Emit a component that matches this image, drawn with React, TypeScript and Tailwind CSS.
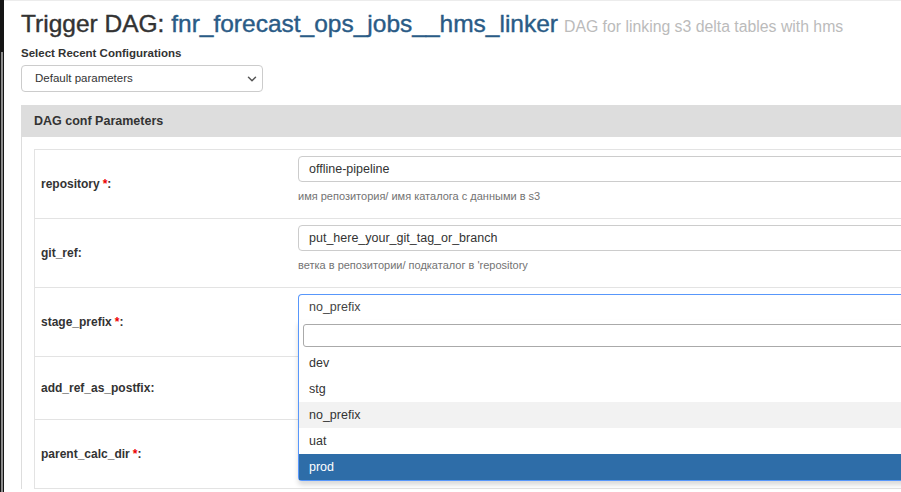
import { ChevronDown } from 'lucide-react';

const rows = [
  { name: 'repository', required: true, value: 'offline-pipeline', help: 'имя репозитория/ имя каталога с данными в s3', h: 'h-[69px]' },
  { name: 'git_ref', required: false, value: 'put_here_your_git_tag_or_branch', help: "ветка в репозитории/ подкаталог в 'repository", h: 'h-[69px]' },
  { name: 'stage_prefix', required: true, select: true, h: 'h-[69px]' },
  { name: 'add_ref_as_postfix', required: false, h: 'h-[63px]' },
  { name: 'parent_calc_dir', required: true, h: 'h-[69px]' },
];

const options = ['dev', 'stg', 'no_prefix', 'uat', 'prod'];

function StageSelect() {
  return (
    <div className="relative">
      {/* select2 ouvert */}
      <div className="h-[26px] border border-[#5897fb] border-b-0 rounded-t-[4px] bg-white pl-[10px] flex items-center text-[12.5px] text-[#444]">
        no_prefix
      </div>
      <div className="absolute left-0 right-0 top-full z-10 bg-white border border-[#5897fb] border-t-0 rounded-b-[4px] shadow-[0_4px_5px_rgba(0,0,0,0.15)]">
        <div className="px-[4px] pt-[4px] pb-[3px]">
          <div className="h-[23px] border border-[#aaa] rounded-[3px]" />
        </div>
        {options.map((o) => (
          <div
            key={o}
            className={`h-[26px] flex items-center pl-[10px] text-[12.5px] ${
              o === 'prod' ? 'bg-[#2e6da8] text-white' : o === 'no_prefix' ? 'bg-[#f2f2f2] text-[#333]' : 'text-[#333]'
            }`}
          >
            {o}
          </div>
        ))}
      </div>
    </div>
  );
}

export default function App() {
  return (
    <div className="w-[901px] h-[492px] overflow-hidden bg-white flex font-['Liberation_Sans',Arial,sans-serif] text-[#333]">
      {/* bord de fenêtre */}
      <div className="w-[4px] shrink-0 flex flex-col bg-[#151515]">
        <div className="h-[52px]" />
        <div className="flex-1 ml-[1px] w-[2px] bg-[#8c8c8c]" />
      </div>

      <div className="flex-1 border-t border-[#ececec] pl-[17px] min-w-0">
        <h2 className="pt-[8px] h-[39px] whitespace-nowrap text-[24.5px] leading-[30px] [-webkit-text-stroke:0.4px]">
          <span className="text-[#333]">Trigger DAG: </span>
          <span className="text-[#2a5b86]">fnr_forecast_ops_jobs__hms_linker</span>
          <span className="text-[15.8px] text-[#bbb] ml-[6px] [-webkit-text-stroke:0px]">DAG for linking s3 delta tables with hms</span>
        </h2>

        <div className="mt-[5px] text-[11.5px] leading-[17px] font-bold">Select Recent Configurations</div>
        <div className="mt-[3px] w-[242px] h-[27px] border border-[#ccc] rounded-[4px] flex items-center justify-between pl-[13px] pr-[3px] text-[11.5px] text-[#333]">
          <span>Default parameters</span>
          <ChevronDown size={14} strokeWidth={2.5} className="text-[#555]" />
        </div>

        {/* panneau */}
        <div className="mt-[13px] mr-[-40px] border-l border-[#ddd]">
          <div className="h-[32px] bg-[#dddddd] flex items-center pl-[12px] text-[12.5px] font-bold text-[#333]">
            DAG conf Parameters
          </div>
          <div className="pt-[12px] pl-[12px]">
            <div className="border-l border-t border-[#e3e3e3]">
              {rows.map((r) => (
                <div key={r.name} className={`${r.h} flex border-b border-[#e3e3e3]`}>
                  <div className="w-[252px] shrink-0 pl-[6px] flex items-center text-[12px] font-bold text-[#333]">
                    <span>
                      {r.name}
                      {r.required && <span className="text-[#e00] ml-[3px]">*</span>}:
                    </span>
                  </div>
                  <div className="flex-1 pl-[11px] pt-[6px]">
                    {r.select ? (
                      <StageSelect />
                    ) : r.value ? (
                      <>
                        <div className="h-[26px] border border-[#ccc] rounded-[4px] flex items-center pl-[10px] text-[12.5px] text-[#333]">
                          {r.value}
                        </div>
                        <div className="mt-[7px] text-[11px] leading-[14px] text-[#737373]">{r.help}</div>
                      </>
                    ) : null}
                  </div>
                </div>
              ))}
            </div>
          </div>
        </div>
      </div>
    </div>
  );
}
